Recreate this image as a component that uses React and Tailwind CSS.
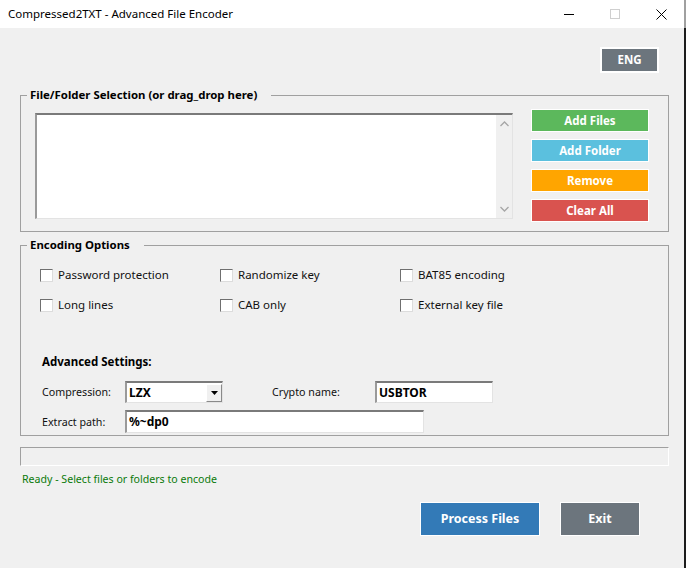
import React from "react";

const font = { fontFamily: '"Noto Sans", "Open Sans", sans-serif' };

function Checkbox({ label }) {
  return (
    <div className="flex items-center h-[20px]">
      <div className="w-[13px] h-[13px] bg-white border border-t-[#6f6f6f] border-l-[#6f6f6f] border-b-[#dcdcdc] border-r-[#dcdcdc] shrink-0" />
      <span className="ml-[5px] text-[11.5px] leading-[16px] text-[#111]">{label}</span>
    </div>
  );
}

function ColorBtn({ label, bg }) {
  return (
    <div className={`w-[118px] h-[23px] border border-white flex items-center justify-center text-white font-bold text-[11.5px] ${bg}`}>
      {label}
    </div>
  );
}

export default function App() {
  return (
    <div className="w-[686px] h-[568px] flex bg-[#1c1c1c] overflow-hidden text-black" style={font}>
      <div className="w-[684px] h-full flex flex-col bg-[#f0f0f0]">
        {/* Title bar */}
        <div className="h-[28px] bg-white flex items-center shrink-0">
          <span className="pl-[8px] text-[11.5px] text-black">Compressed2TXT - Advanced File Encoder</span>
          <div className="ml-auto flex h-full">
            <div className="w-[46px] h-full flex items-center justify-center">
              <div className="w-[10px] h-px bg-black" />
            </div>
            <div className="w-[46px] h-full flex items-center justify-center">
              <div className="w-[10px] h-[10px] border border-[#cfcfcf]" />
            </div>
            <div className="w-[46px] h-full flex items-center justify-center">
              <svg width="11" height="11" viewBox="0 0 11 11">
                <path d="M0.5 0.5 L10.5 10.5 M10.5 0.5 L0.5 10.5" stroke="#000" strokeWidth="1" />
              </svg>
            </div>
          </div>
        </div>

        {/* ENG */}
        <div className="flex justify-end pr-[25px] pt-[19px]">
          <div className="w-[59px] h-[26px] border-2 border-white bg-[#6c757d] text-white font-bold text-[11.5px] flex items-center justify-center">
            ENG
          </div>
        </div>

        {/* Group 1 */}
        <fieldset className="ml-[20px] mr-[15px] mt-[14px] border border-[#a0a0a0] p-0 m-0">
          <legend className="ml-[6px] pl-[3px] pr-[14px] text-[11.4px] leading-[16px] font-bold">
            File/Folder Selection (or drag_drop here)
          </legend>
          <div className="flex pl-[14px] pt-[6px] pb-[9px]">
            <div className="mt-[4px] w-[478px] h-[106px] bg-white border-t-2 border-l-2 border-b border-r border-t-[#7a7a7a] border-l-[#9a9a9a] border-b-[#e3e3e3] border-r-[#e3e3e3] flex justify-end">
              <div className="w-[16px] h-full bg-[#f0f0f0] flex flex-col items-center justify-between py-[6px]">
                <svg width="9" height="6" viewBox="0 0 9 6">
                  <path d="M0.5 5 L4.5 1 L8.5 5" stroke="#a6a6a6" strokeWidth="1.3" fill="none" />
                </svg>
                <svg width="9" height="6" viewBox="0 0 9 6">
                  <path d="M0.5 1 L4.5 5 L8.5 1" stroke="#a6a6a6" strokeWidth="1.3" fill="none" />
                </svg>
              </div>
            </div>
            <div className="ml-[18px] flex flex-col gap-[7px]">
              <ColorBtn label="Add Files" bg="bg-[#5cb85c]" />
              <ColorBtn label="Add Folder" bg="bg-[#5bc0de]" />
              <ColorBtn label="Remove" bg="bg-[#ffa500]" />
              <ColorBtn label="Clear All" bg="bg-[#d9534f]" />
            </div>
          </div>
        </fieldset>

        {/* Group 2 */}
        <fieldset className="ml-[20px] mr-[15px] mt-[5px] border border-[#a0a0a0] p-0 m-0">
          <legend className="ml-[6px] pl-[3px] pr-[14px] text-[11.4px] leading-[16px] font-bold">
            Encoding Options
          </legend>
          <div className="pl-[19px] pt-[12px] pb-[2px]">
            <div className="grid grid-cols-[180px_180px_180px] gap-y-[10px]">
              <Checkbox label="Password protection" />
              <Checkbox label="Randomize key" />
              <Checkbox label="BAT85 encoding" />
              <Checkbox label="Long lines" />
              <Checkbox label="CAB only" />
              <Checkbox label="External key file" />
            </div>
            <div className="mt-[39px] ml-[2px] text-[11.5px] leading-[16px] font-bold">Advanced Settings:</div>
            <div className="mt-[11px] ml-[2px] flex items-center h-[22px]">
              <div className="w-[83px] text-[10.7px] leading-[14px] text-[#111] whitespace-nowrap">Compression:</div>
              <div className="w-[98px] h-[22px] bg-white border-t-2 border-l-2 border-b border-r border-t-[#7a7a7a] border-l-[#9a9a9a] border-b-[#e3e3e3] border-r-[#e3e3e3] flex items-center">
                <span className="pl-[2px] text-[12px] font-bold flex-1">LZX</span>
                <div className="w-[16px] h-[18px] bg-[#f0f0f0] border border-t-white border-l-white border-b-[#8a8a8a] border-r-[#8a8a8a] flex items-center justify-center">
                  <svg width="7" height="4" viewBox="0 0 7 4">
                    <path d="M0 0 L7 0 L3.5 4 Z" fill="#000" />
                  </svg>
                </div>
              </div>
              <div className="ml-[49px] w-[103px] text-[10.7px] leading-[14px] text-[#111]">Crypto name:</div>
              <div className="w-[118px] h-[22px] bg-white border-t-2 border-l-2 border-b border-r border-t-[#7a7a7a] border-l-[#9a9a9a] border-b-[#e3e3e3] border-r-[#e3e3e3] flex items-center">
                <span className="pl-[2px] text-[12px] font-bold">USBTOR</span>
              </div>
            </div>
            <div className="mt-[7px] ml-[2px] flex items-center h-[23px]">
              <div className="w-[83px] text-[10.7px] leading-[14px] text-[#111]">Extract path:</div>
              <div className="w-[299px] h-[23px] bg-white border-t-2 border-l-2 border-b border-r border-t-[#7a7a7a] border-l-[#9a9a9a] border-b-[#e3e3e3] border-r-[#e3e3e3] flex items-center">
                <span className="pl-[2px] text-[12px] font-bold">%~dp0</span>
              </div>
            </div>
          </div>
        </fieldset>

        {/* Progress bar */}
        <div className="ml-[20px] mr-[15px] mt-[11px] h-[19px] bg-[#f0f0f0] border border-t-[#a0a0a0] border-l-[#a0a0a0] border-b-white border-r-white" />

        {/* Status */}
        <div className="pl-[22px] mt-[6px] text-[10.6px] leading-[14px] text-[#0a7a0a]">
          Ready - Select files or folders to encode
        </div>

        {/* Bottom buttons */}
        <div className="flex justify-end pr-[44px] mt-[16px] gap-[20px]">
          <div className="w-[120px] h-[34px] border border-white bg-[#337ab7] text-white font-bold text-[12.5px] flex items-center justify-center">
            Process Files
          </div>
          <div className="w-[80px] h-[34px] border border-white bg-[#6c757d] text-white font-bold text-[12.5px] flex items-center justify-center">
            Exit
          </div>
        </div>
      </div>
      <div className="w-[2px] h-full flex flex-col">
        <div className="h-[28px] bg-[#a0a0a0]" />
        <div className="flex-1 bg-[#1c1c1c]" />
      </div>
    </div>
  );
}
